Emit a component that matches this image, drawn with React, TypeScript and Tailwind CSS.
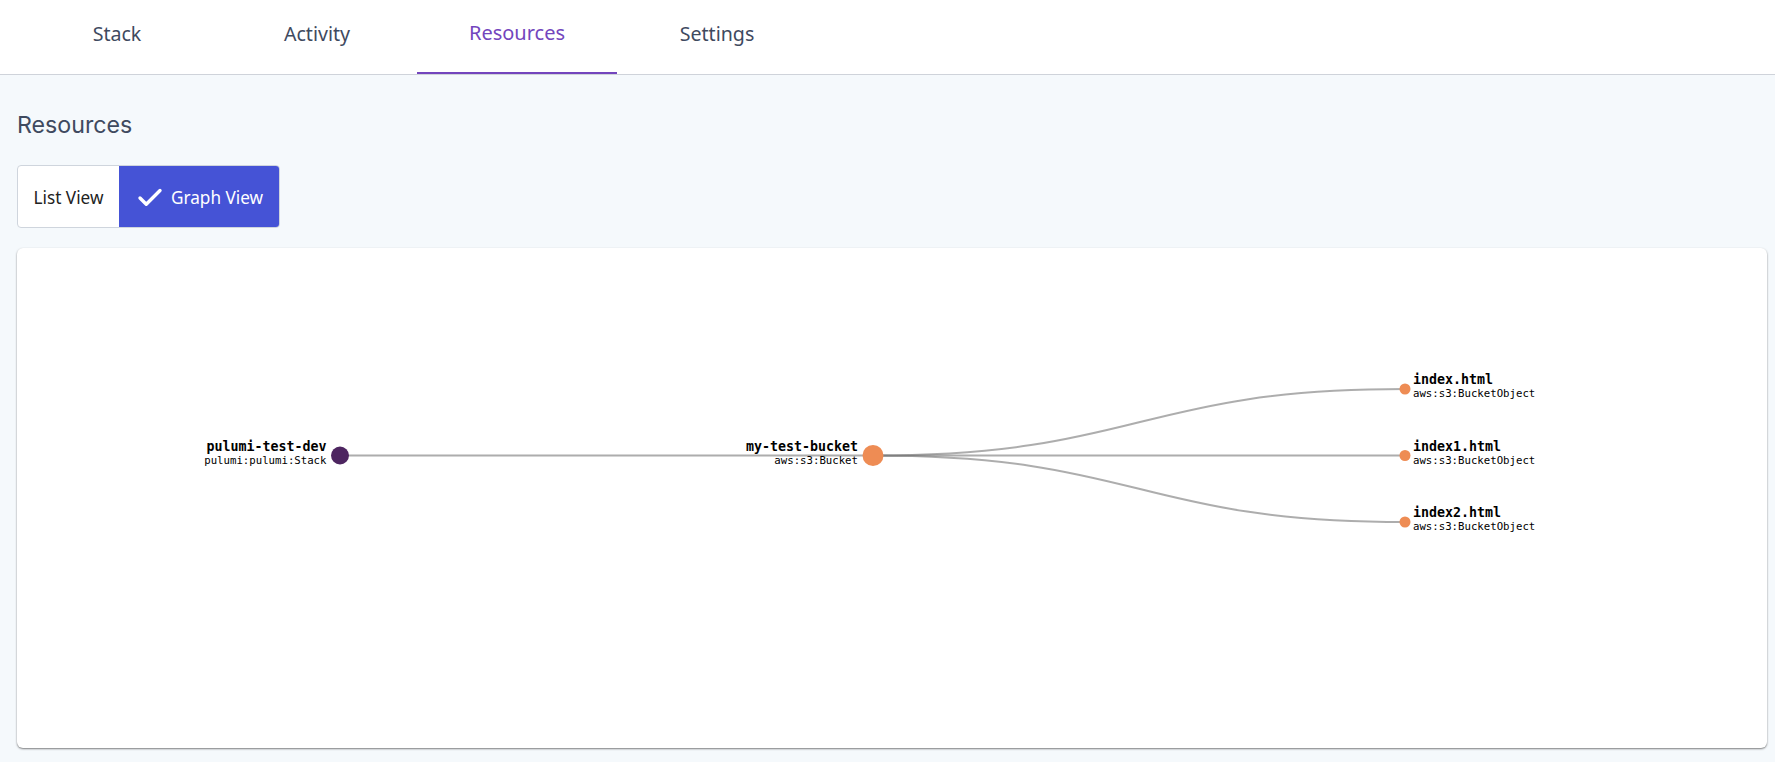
import { Check } from 'lucide-react'

const tabs = ['Stack', 'Activity', 'Resources', 'Settings']

type GraphNode = {
  x: number
  y: number
  r: number
  color: string
  name: string
  type: string
  side: 'left' | 'right'
}

const nodes: GraphNode[] = [
  { x: 340, y: 455.5, r: 9, color: '#4d2560', name: 'pulumi-test-dev', type: 'pulumi:pulumi:Stack', side: 'left' },
  { x: 873, y: 455.5, r: 10.5, color: '#ee8c54', name: 'my-test-bucket', type: 'aws:s3:Bucket', side: 'left' },
  { x: 1405, y: 389, r: 5.5, color: '#ee8c54', name: 'index.html', type: 'aws:s3:BucketObject', side: 'right' },
  { x: 1405, y: 455.5, r: 5.5, color: '#ee8c54', name: 'index1.html', type: 'aws:s3:BucketObject', side: 'right' },
  { x: 1405, y: 522, r: 5.5, color: '#ee8c54', name: 'index2.html', type: 'aws:s3:BucketObject', side: 'right' },
]

const links = [
  'M340 455.5H873',
  'M873 455.5C1139 455.5 1139 389 1405 389',
  'M873 455.5H1405',
  'M873 455.5C1139 455.5 1139 522 1405 522',
]

// offsets are relative to the card, the graph coordinates are page coordinates
function Graph() {
  return (
    <svg width="1750" height="500" viewBox="17 248 1750 500" className="block">
      {links.map(d => (
        <path key={d} d={d} fill="none" stroke="#777" strokeOpacity="0.6" strokeWidth="2" />
      ))}
      {nodes.map(n => {
        const left = n.side === 'left'
        const tx = left ? n.x - n.r - 4.5 : n.x + n.r + 2.5
        return (
          <g key={n.name}>
            <circle cx={n.x} cy={n.y} r={n.r} fill={n.color} />
            <text
              x={tx}
              y={n.y - 5}
              textAnchor={left ? 'end' : 'start'}
              className="fill-black font-['DejaVu_Sans_Mono',monospace] text-[13.3px] font-bold"
            >
              {n.name}
            </text>
            <text
              x={tx}
              y={n.y + 8}
              textAnchor={left ? 'end' : 'start'}
              className="fill-black font-['DejaVu_Sans_Mono',monospace] text-[10.7px]"
            >
              {n.type}
            </text>
          </g>
        )
      })}
    </svg>
  )
}

export default function App() {
  return (
    <div className="h-[762px] overflow-hidden bg-[#f5f9fc] font-['Noto_Sans',sans-serif]">
      <div className="flex h-[75px] border-b border-[#cfd3da] bg-white pl-[17px]">
        {tabs.map(t => (
          <div
            key={t}
            className={
              t === 'Resources'
                ? 'flex h-[74px] w-[200px] items-center justify-center border-b-2 border-[#7345bd] pb-[6px] text-[20px] text-[#7345bd]'
                : 'flex h-[74px] w-[200px] items-center justify-center pb-[6px] text-[19.6px] text-[#3f4a5f]'
            }
          >
            {t}
          </div>
        ))}
      </div>

      <div className="px-[17px]">
        <h1 className="mt-[33px] font-['Inter',sans-serif] text-[23.2px] leading-[34px] text-[#3f4a5f]">Resources</h1>

        <div className="mt-[23px] flex h-[63px] w-[263px] overflow-hidden rounded-[4px] border border-[#cfd5dd] bg-white text-[17.2px]">
          <div className="flex w-[101px] items-center justify-center pt-[2px] text-[#222]">List View</div>
          <div className="flex flex-1 items-center justify-center gap-[6px] bg-[#4553d6] pt-[2px] text-white">
            <Check size={30} strokeWidth={2.7} />
            <span>Graph View</span>
          </div>
        </div>

        <div className="mt-[20px] h-[500px] w-[1750px] overflow-hidden rounded-[6px] bg-white shadow-[0_1px_2px_rgba(0,0,0,0.5)]">
          <Graph />
        </div>
      </div>
    </div>
  )
}
